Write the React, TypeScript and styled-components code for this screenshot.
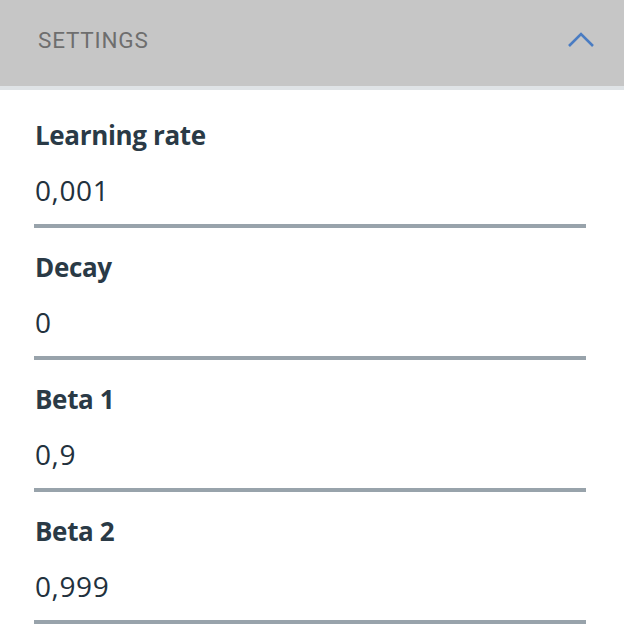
import React from "react";
import styled, { createGlobalStyle } from "styled-components";

const GlobalStyle = createGlobalStyle`
  html, body {
    margin: 0;
    padding: 0;
    background: #ffffff;
  }
  * { box-sizing: border-box; }
`;

const Panel = styled.div`
  width: 624px;
  min-height: 636px;
  background: #ffffff;
  font-family: "Open Sans", "Noto Sans", sans-serif;
`;

const Header = styled.div`
  height: 90px;
  display: flex;
  align-items: center;
  justify-content: space-between;
  padding: 0 29px 6px 38px;
  background: #c6c6c6;
  border-bottom: 4px solid #dfe3e6;
`;

const Title = styled.span`
  font-family: Roboto, "Open Sans", sans-serif;
  font-weight: 400;
  font-size: 22.5px;
  letter-spacing: 0.8px;
  color: #6e6e6e;
`;

const Chevron = styled.svg`
  display: block;
  width: 28px;
  height: 16px;
`;

const Fields = styled.div`
  padding: 6px 38px 0 34px;
`;

const Field = styled.div`
  padding: 23px 0 18px 1px;
  border-bottom: 4px solid #98a3ab;
`;

const Label = styled.div`
  font-size: 26px;
  line-height: 32px;
  font-weight: 700;
  letter-spacing: -0.35px;
  color: #2a3a46;
`;

const Value = styled.div`
  margin-top: 23px;
  font-size: 28px;
  line-height: 32px;
  font-weight: 400;
  letter-spacing: 0.6px;
  color: #22313d;
`;

const settings = [
  { label: "Learning rate", value: "0,001" },
  { label: "Decay", value: "0" },
  { label: "Beta 1", value: "0,9" },
  { label: "Beta 2", value: "0,999" },
];

export default function App() {
  return (
    <>
      <GlobalStyle />
      <Panel>
        <Header>
          <Title>SETTINGS</Title>
          <Chevron viewBox="0 0 28 16">
            <polyline
              points="2,14 14,2 26,14"
              fill="none"
              stroke="#4a7cc2"
              strokeWidth="2.6"
            />
          </Chevron>
        </Header>
        <Fields>
          {settings.map((s) => (
            <Field key={s.label}>
              <Label>{s.label}</Label>
              <Value>{s.value}</Value>
            </Field>
          ))}
        </Fields>
      </Panel>
    </>
  );
}
